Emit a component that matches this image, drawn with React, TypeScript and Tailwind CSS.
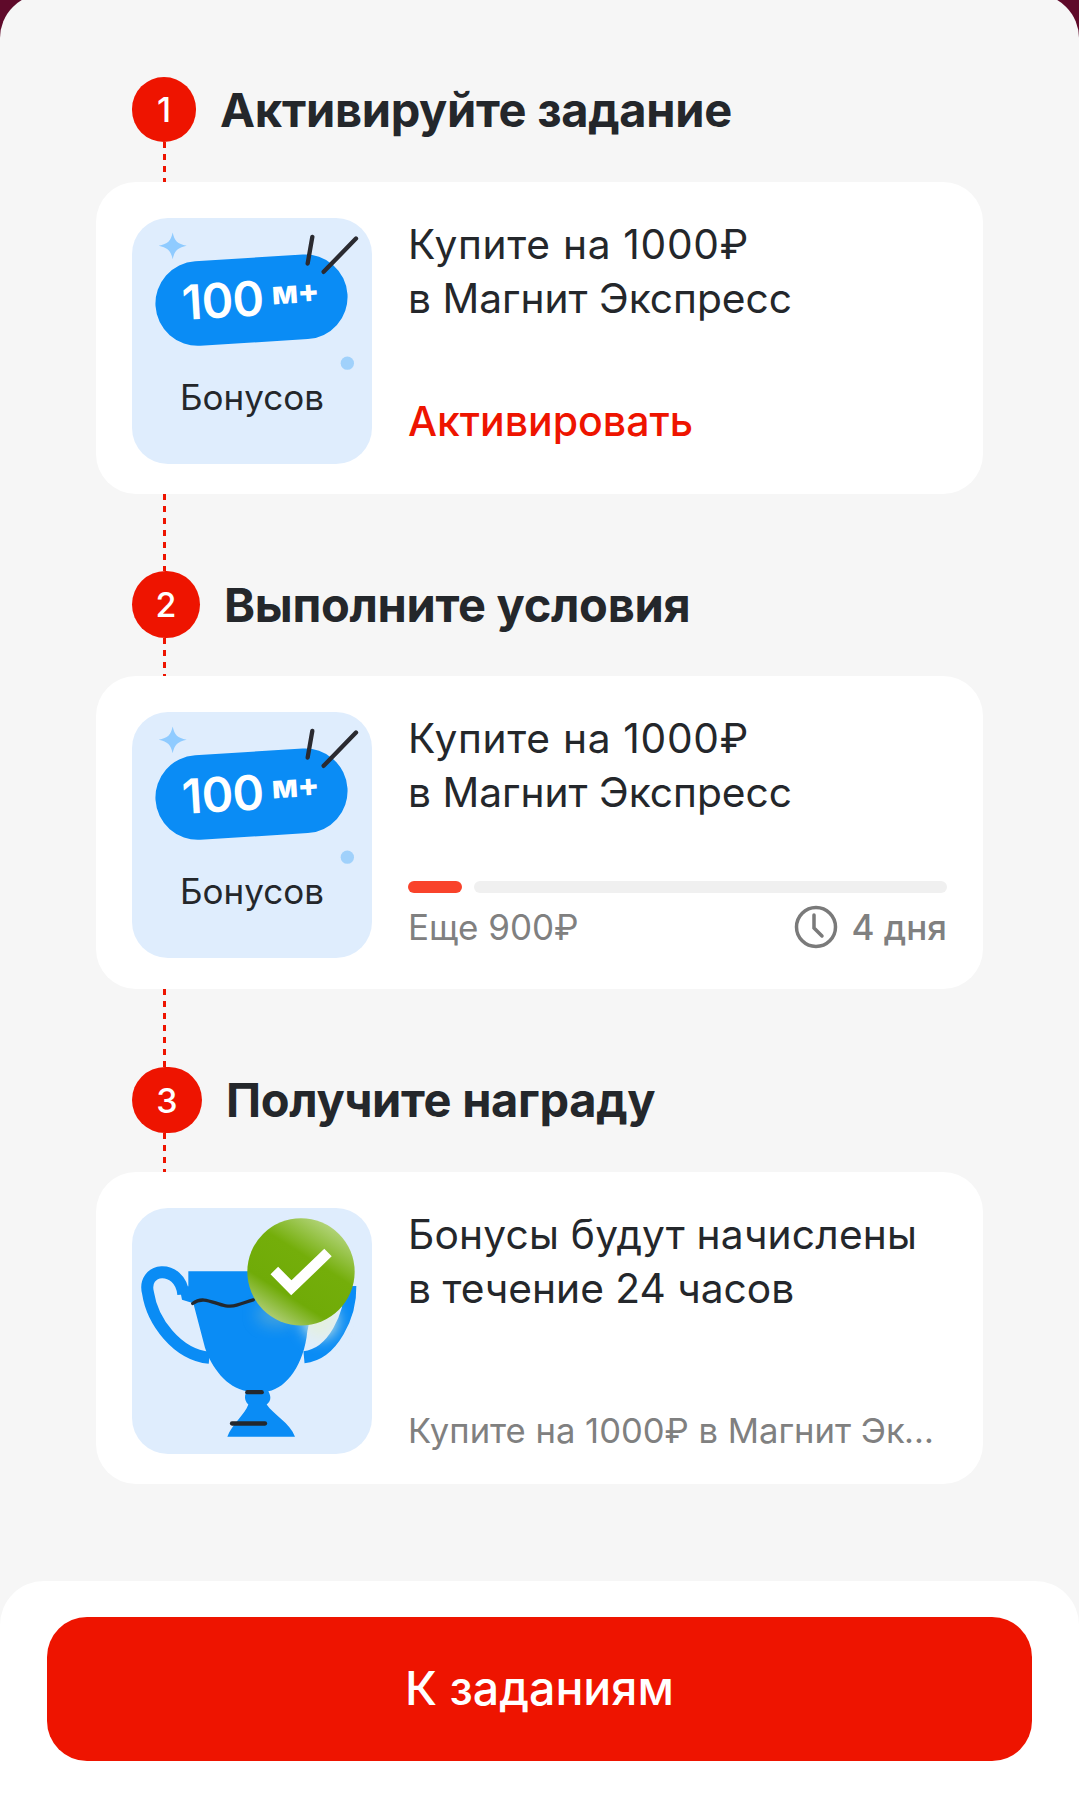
const FONT = "font-['Inter','Noto_Sans',sans-serif]"

// ── Tile art ──────────────────────────────────────────────────────────────
function BonusArt() {
  return (
    <svg viewBox="0 0 720 735" className="absolute inset-0 h-full w-full" aria-hidden="true">
      <path d="M122 42 C128 68 136 76 164 82 C136 88 128 97 122 122 C116 97 108 88 80 82 C108 76 116 68 122 42Z" fill="#8fcbff" />
      <circle cx="646" cy="434" r="20" fill="#a0d1fb" />
      <rect x="70" y="118" width="577" height="254" rx="127" fill="#0a8cf5" transform="rotate(-3.5 358 245)" />
      <text x="150" y="292" fill="#fff" fontSize="144" fontWeight="600" letterSpacing="-2" fontFamily="Inter, sans-serif" transform="rotate(-3.5 358 245)">100</text>
      <text x="420" y="262" fill="#fff" fontSize="96" fontWeight="800" letterSpacing="-2" fontFamily="Inter, sans-serif" transform="rotate(-3.5 358 245)">м+</text>
      <path d="M541 55 L527 135" stroke="#2a2a30" strokeWidth="13" strokeLinecap="round" />
      <path d="M672 60 L575 160" stroke="#2a2a30" strokeWidth="13" strokeLinecap="round" />
    </svg>
  )
}

function TrophyArt() {
  return (
    <svg viewBox="36 52 720 735" className="absolute inset-0 h-full w-full" aria-hidden="true">
      <defs>
        <linearGradient id="check-bg" x1="0.9" y1="0.05" x2="0.3" y2="1">
          <stop offset="0" stopColor="#c0dc92" />
          <stop offset="0.4" stopColor="#74ae0a" />
          <stop offset="0.75" stopColor="#70ab08" />
          <stop offset="1" stopColor="#b2d07c" />
        </linearGradient>
        <filter id="soft" x="-50%" y="-50%" width="200%" height="200%">
          <feGaussianBlur stdDeviation="22" />
        </filter>
      </defs>
      <path d="M190 310 C186 262 152 242 125 243 C95 245 75 270 84 305 C97 390 170 490 268 500" fill="none" stroke="#0a8cf5" strokeWidth="36" />
      <path d="M691 285 C693 370 640 490 552 498" fill="none" stroke="#0a8cf5" strokeWidth="36" />
      <path
        d="M205 240 L600 240 L562 420 C552 520 500 590 445 600 C455 618 452 630 440 640 C460 670 510 695 525 737 L322 737 C335 700 375 670 385 640 C370 625 375 610 380 600 C320 590 275 530 255 470 L220 336 L186 326 L180 296 L205 285Z"
        fill="#0a8cf5"
      />
      <path d="M218 337 C260 305 300 358 350 342 C370 336 385 330 400 326" fill="none" stroke="#23282e" strokeWidth="10" strokeLinecap="round" />
      <path d="M382 603 H425" stroke="#23282e" strokeWidth="13" strokeLinecap="round" />
      <path d="M336 697 H435" stroke="#23282e" strokeWidth="13" strokeLinecap="round" />
      <ellipse cx="600" cy="390" rx="50" ry="50" fill="#e4f0df" filter="url(#soft)" />
      <ellipse cx="470" cy="370" rx="60" ry="35" fill="#7db8c8" opacity="0.5" filter="url(#soft)" />
      <circle cx="543" cy="242" r="161" fill="url(#check-bg)" />
      <path d="M463 238 L514 290 L624 184" fill="none" stroke="#fff" strokeWidth="32" />
    </svg>
  )
}

function Tile({ children, label }: { children: React.ReactNode; label?: string }) {
  return (
    <div className="relative flex h-[246px] w-[240px] shrink-0 items-end justify-center overflow-hidden rounded-[36px] bg-[#dfedfd] pb-[47px]">
      {children}
      {label && <span className="relative text-[35px] leading-[40px] text-[#24272b]">{label}</span>}
    </div>
  )
}

// ── Step scaffold ─────────────────────────────────────────────────────────
function Dots({ height }: { height: string }) {
  return (
    <div
      className={`ml-[67px] w-[3px] bg-[repeating-linear-gradient(to_bottom,#ee1400_0,#ee1400_6px,transparent_6px,transparent_12px)] ${height}`}
    />
  )
}

function StepHead({ n, title, circle, height }: { n: number; title: string; circle: string; height: string }) {
  return (
    <div className={`ml-[36px] flex items-center gap-[24px] ${height}`}>
      <div className={`flex h-full items-center justify-center rounded-full bg-[#ee1400] text-[34px] font-medium text-white ${circle}`}>
        {n}
      </div>
      <h2 className="text-[47px] leading-[54px] font-bold tracking-[-0.3px] text-[#24272b]">{title}</h2>
    </div>
  )
}

function Card({
  tile,
  lines,
  children,
  height,
  firstLine,
}: {
  tile: React.ReactNode
  lines: string[]
  children: React.ReactNode
  height: string
  firstLine: string
}) {
  return (
    <div className={`flex gap-[36px] rounded-[40px] bg-white pt-[36px] pr-[36px] pl-[36px] ${height}`}>
      {tile}
      <div className="flex min-w-0 flex-1 flex-col">
        <p className="text-[40.7px] leading-[54px] text-[#24272b]">
          <span className={firstLine}>{lines[0]}</span>
          <br />
          {lines[1]}
        </p>
        {children}
      </div>
    </div>
  )
}

export default function App() {
  return (
    <div className={`h-[1797px] w-[1079px] overflow-hidden bg-[#5f0a2a] ${FONT}`}>
      <div className="-mt-[6px] flex h-[1803px] flex-col rounded-t-[44px] bg-[#f6f6f6] pt-[83px]">
        <div className="mr-[96px] ml-[96px]">
          <StepHead n={1} title="Активируйте задание" circle="w-[64px]" height="h-[65px]" />
          <Dots height="h-[40px]" />
          <Card
            height="h-[312px]"
            tile={<Tile label="Бонусов"><BonusArt /></Tile>}
            lines={['Купите на 1000₽', 'в Магнит Экспресс']}
            firstLine="tracking-[0.7px]"
          >
            <span className="mt-auto mb-[46px] text-[41px] leading-[54px] font-medium text-[#ee1400]">Активировать</span>
          </Card>
          <Dots height="h-[77px]" />

          <StepHead n={2} title="Выполните условия" circle="w-[68px]" height="h-[67px]" />
          <Dots height="h-[38px]" />
          <Card
            height="h-[313px]"
            tile={<Tile label="Бонусов"><BonusArt /></Tile>}
            lines={['Купите на 1000₽', 'в Магнит Экспресс']}
            firstLine="tracking-[0.7px]"
          >
            <div className="mt-[61px] flex gap-[12px]">
              <div className="h-[12px] w-[54px] rounded-full bg-[#f9432b]" />
              <div className="h-[12px] flex-1 rounded-full bg-[#f0f0f0]" />
            </div>
            <div className="mt-[12px] flex items-center justify-between text-[35px] leading-[44px] text-[#808080]">
              <span>Еще 900₽</span>
              <span className="flex items-center gap-[14px] font-medium">
                <svg width="44" height="44" viewBox="0 0 44 44" fill="none" stroke="#7a7a7a" strokeWidth="3.5" strokeLinecap="round" aria-hidden="true">
                  <circle cx="22" cy="22" r="19.5" />
                  <path d="M20 10 V23 L28 31" />
                </svg>
                4 дня
              </span>
            </div>
          </Card>
          <Dots height="h-[78px]" />

          <StepHead n={3} title="Получите награду" circle="w-[70px]" height="h-[66px]" />
          <Dots height="h-[39px]" />
          <Card
            height="h-[312px]"
            tile={<Tile><TrophyArt /></Tile>}
            lines={['Бонусы будут начислены', 'в течение 24 часов']}
            firstLine="tracking-[0.2px]"
          >
            <span className="mt-auto mb-[32px] truncate pr-[2px] text-[34.6px] leading-[44px] text-[#808080]">
              Купите на 1000₽ в Магнит Экспресс
            </span>
          </Card>
        </div>

        <div className="mt-[97px] flex-1 rounded-t-[44px] bg-white px-[47px] pt-[36px]">
          <button type="button" className="h-[144px] w-full rounded-[40px] bg-[#ee1400] text-[46.5px] font-medium text-white">
            К заданиям
          </button>
        </div>
      </div>
    </div>
  )
}
